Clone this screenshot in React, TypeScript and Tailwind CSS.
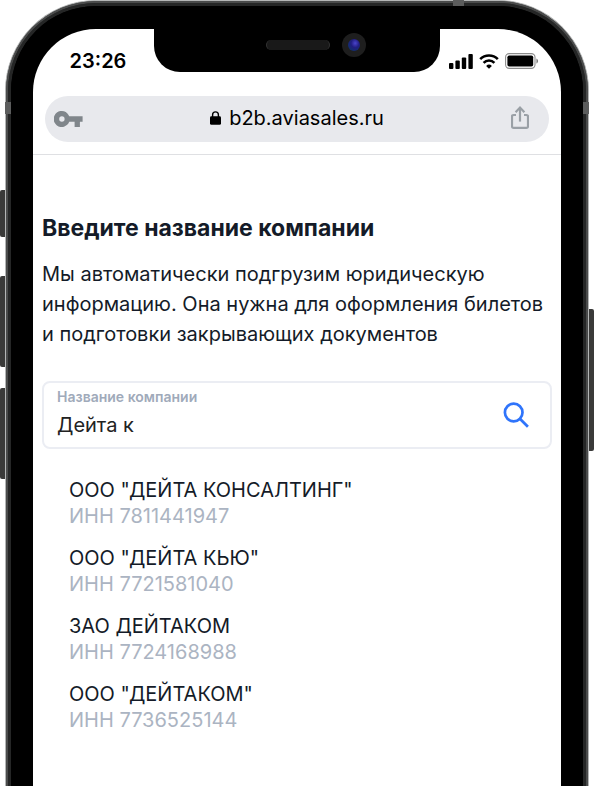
import { useState } from "react";

const companies = [
  { name: 'ООО "ДЕЙТА КОНСАЛТИНГ"', inn: "7811441947" },
  { name: 'ООО "ДЕЙТА КЬЮ"', inn: "7721581040" },
  { name: "ЗАО ДЕЙТАКОМ", inn: "7724168988" },
  { name: 'ООО "ДЕЙТАКОМ"', inn: "7736525144" },
];

const SignalIcon = () => (
  <svg width="24" height="15" viewBox="0 0 24 15" aria-hidden="true">
    <rect x="0" y="9" width="4.4" height="6" rx="1" />
    <rect x="6.4" y="6.6" width="4.4" height="8.4" rx="1" />
    <rect x="12.8" y="3.4" width="4.4" height="11.6" rx="1" />
    <rect x="19.4" y="0" width="4.4" height="15" rx="1" />
  </svg>
);

const WifiIcon = () => (
  <svg width="20" height="15" viewBox="0 0 20 15" aria-hidden="true">
    <path d="M1.2 5.1a12.4 12.4 0 0 1 17.6 0" fill="none" stroke="#000" strokeWidth="2.6" />
    <path d="M4.6 8.8a7.6 7.6 0 0 1 10.8 0" fill="none" stroke="#000" strokeWidth="2.6" />
    <path d="M7.1 11.9a4.1 4.1 0 0 1 5.8 0L10 14.8z" />
  </svg>
);

const BatteryIcon = () => (
  <svg width="34" height="16" viewBox="0 0 34 16" aria-hidden="true">
    <rect x="0.6" y="0.6" width="29.4" height="14.8" rx="3.6" fill="none" stroke="#000" strokeOpacity="0.45" strokeWidth="1.1" />
    <rect x="2.4" y="2.4" width="25.8" height="11.2" rx="1.8" />
    <path d="M31.4 5.4v5.2c1-.4 1.7-1.4 1.7-2.6s-.7-2.2-1.7-2.6z" fillOpacity="0.5" />
  </svg>
);

const KeyIcon = () => (
  <svg width="29" height="16" viewBox="0 0 29 16" aria-hidden="true">
    <path
      fill="#80868b"
      fillRule="evenodd"
      d="M15.2 5.3A8 8 0 1 0 15.2 10.7H20.6V16H25.9V10.7H28.6V5.3ZM7.9 10.7A2.7 2.7 0 1 1 7.9 5.3a2.7 2.7 0 0 1 0 5.4Z"
    />
  </svg>
);

const LockIcon = () => (
  <svg width="11" height="14" viewBox="0 0 11 14" aria-hidden="true">
    <path d="M2.6 6V3.8a2.9 2.9 0 0 1 5.8 0V6" fill="none" stroke="#000" strokeWidth="1.4" />
    <rect x="0" y="5.2" width="11" height="8.6" rx="1.4" />
  </svg>
);

const ShareIcon = () => (
  <svg width="18" height="27" viewBox="0 0 18 27" fill="none" stroke="#9aa0a6" strokeWidth="2.2" aria-hidden="true">
    <path d="M5 9H2.6C1.6 9 1 9.6 1 10.4v9.8c0 1 .6 1.6 1.6 1.6h12.8c1 0 1.6-.6 1.6-1.6v-9.8c0-.8-.6-1.4-1.6-1.4H13" />
    <path d="M9 15.6V2" />
    <path d="M4.6 6.2 9 1.6l4.4 4.6" />
  </svg>
);

const SearchIcon = () => (
  <svg width="26" height="26" viewBox="0 0 26 26" fill="none" stroke="#2f74fb" strokeWidth="2.7" aria-hidden="true">
    <circle cx="10.7" cy="10.5" r="8.8" />
    <path d="M16.9 16.7 24.9 24.7" />
  </svg>
);

const StatusBar = () => (
  <div className="flex items-start">
    <div className="flex h-16 flex-1 items-center justify-center pl-[9px] text-xl leading-6 font-semibold">23:26</div>
    {/* Notch */}
    <div className="w-[286px]">
      <div className="flex h-[43px] justify-end gap-3 rounded-b-[26px] bg-black pt-1 pr-[74px]">
        <div className="mt-[7px] h-[10px] w-16 rounded-full border-x border-[#333] bg-[#191919]" />
        <div className="flex size-6 items-center justify-center rounded-full bg-[#1e1e1e]">
          <div className="size-3 rounded-full bg-radial-[at_60%_35%] from-[#4a45cc] via-[#211d80] via-40% to-[#063c62]" />
        </div>
      </div>
    </div>
    <div className="flex h-16 flex-1 items-center gap-[6px] pl-[9px]">
      <SignalIcon />
      <WifiIcon />
      <BatteryIcon />
    </div>
  </div>
);

const AddressBar = () => (
  <div className="border-b border-[#dfe0e3] px-3 pt-[3px] pb-3">
    <div className="flex h-[46px] items-center justify-between rounded-full bg-[#e8e9ed] pr-5 pl-[9px]">
      <button type="button" aria-label="Пароли">
        <KeyIcon />
      </button>
      <div className="flex items-center gap-2 pb-[2px] text-xl leading-6">
        <LockIcon />
        <span>b2b.aviasales.ru</span>
      </div>
      <button type="button" aria-label="Поделиться">
        <ShareIcon />
      </button>
    </div>
  </div>
);

const CompanyForm = () => {
  const [query, setQuery] = useState("Дейта к");

  return (
    <main className="px-[9px] pt-[58px] text-[#141b28]">
      <h1 className="text-[23px] leading-[30px] font-bold">Введите название компании</h1>
      <p className="mt-4 text-xl leading-[30px]">
        Мы автоматически подгрузим юридическую информацию. Она нужна для оформления билетов и подготовки закрывающих документов
      </p>

      <div className="mt-8 flex h-[68px] items-center rounded-lg border-2 border-[#ebedf3] pr-[21px] pl-[13px]">
        <div className="flex min-w-0 flex-1 flex-col">
          <label htmlFor="company" className="text-sm leading-5 font-semibold text-[#a0aaba]">
            Название компании
          </label>
          <input
            id="company"
            type="text"
            value={query}
            onChange={(e) => setQuery(e.target.value)}
            className="h-9 w-full bg-transparent text-xl leading-7 text-[#222] outline-none"
          />
        </div>
        <button type="button" aria-label="Найти">
          <SearchIcon />
        </button>
      </div>

      <ul className="mt-7 flex flex-col gap-4 pl-[27px]">
        {companies.map((company) => (
          <li key={company.inn}>
            <button type="button" onClick={() => setQuery(company.name)} className="block text-left text-xl leading-[26px]">
              <span className="block">{company.name}</span>
              <span className="block text-[#abb4c2]">ИНН {company.inn}</span>
            </button>
          </li>
        ))}
      </ul>
    </main>
  );
};

export default function App() {
  return (
    <div className="relative flex min-h-screen overflow-hidden bg-white px-[5px] font-['Inter',sans-serif] text-black">
      {/* Side buttons */}
      <div className="absolute top-[190px] left-0 h-[47px] w-[5px] rounded-l-xs bg-[#3a3a39]" />
      <div className="absolute top-[276px] left-0 h-[91px] w-[5px] rounded-l-xs bg-[#3a3a39]" />
      <div className="absolute top-[388px] left-0 h-[91px] w-[5px] rounded-l-xs bg-[#3a3a39]" />
      <div className="absolute top-[309px] right-0 h-[142px] w-[5px] rounded-r-xs bg-[#3a3a39]" />

      {/* Metal frame, bezel, screen */}
      <div className="flex flex-1 rounded-t-[91px] border border-b-0 border-[#b4b6b6] bg-[#4a4b4b]">
        <div className="flex flex-1 rounded-t-[90px] border-2 border-b-0 border-[#4a4b4b] bg-[#252626]">
          <div className="flex flex-1 rounded-t-[88px] border-[3px] border-b-0 border-[#252626] bg-black">
            <div className="flex flex-1 rounded-t-[85px] bg-black px-[22px] pt-[23px]">
              <div className="min-w-0 flex-1 rounded-t-[63px] bg-white">
                <StatusBar />
                <AddressBar />
                <CompanyForm />
              </div>
            </div>
          </div>
        </div>
      </div>

      {/* Antenna lines */}
      <div className="absolute top-[102px] left-[5px] h-3 w-[6px] bg-[#5c5d5d]" />
      <div className="absolute top-[102px] right-[5px] h-3 w-[6px] bg-[#5c5d5d]" />
      <div className="absolute top-0 right-[130px] h-[6px] w-[11px] bg-[#5c5d5d]" />
    </div>
  );
}
